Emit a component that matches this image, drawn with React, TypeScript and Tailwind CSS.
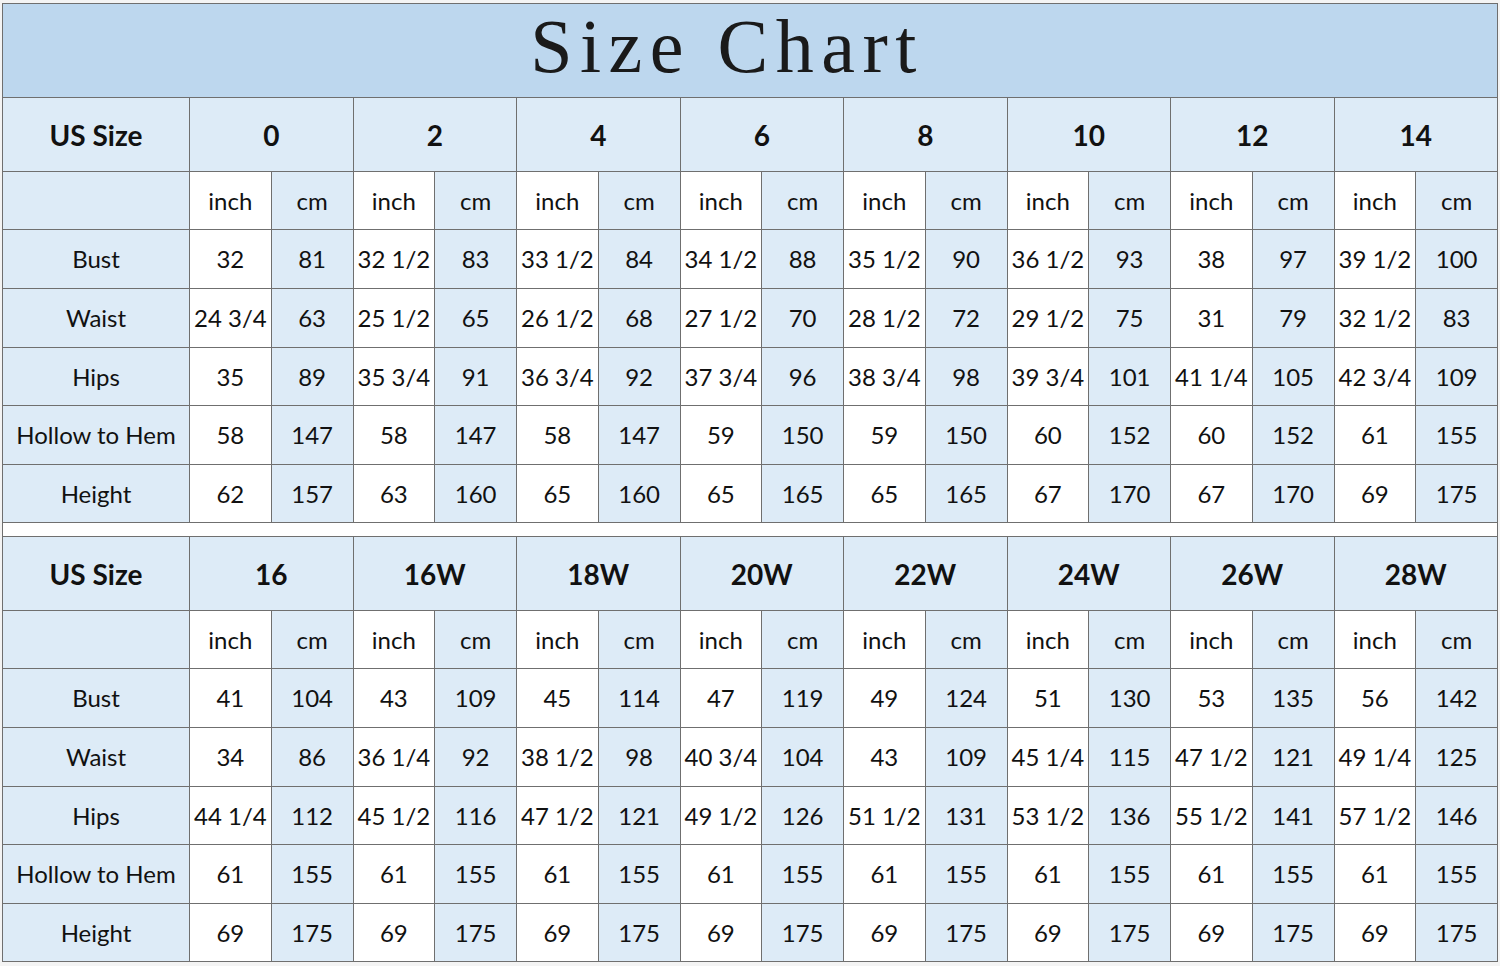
type Cell = [string, string];

interface Row {
  label: string;
  values: Cell[];
}

interface SizeTable {
  sizes: string[];
  rows: Row[];
}

const same = (c: Cell): Cell[] => Array.from({ length: 8 }, () => c);

const tables: SizeTable[] = [
  {
    sizes: ["0", "2", "4", "6", "8", "10", "12", "14"],
    rows: [
      {
        label: "Bust",
        values: [["32", "81"], ["32 1/2", "83"], ["33 1/2", "84"], ["34 1/2", "88"], ["35 1/2", "90"], ["36 1/2", "93"], ["38", "97"], ["39 1/2", "100"]],
      },
      {
        label: "Waist",
        values: [["24 3/4", "63"], ["25 1/2", "65"], ["26 1/2", "68"], ["27 1/2", "70"], ["28 1/2", "72"], ["29 1/2", "75"], ["31", "79"], ["32 1/2", "83"]],
      },
      {
        label: "Hips",
        values: [["35", "89"], ["35 3/4", "91"], ["36 3/4", "92"], ["37 3/4", "96"], ["38 3/4", "98"], ["39 3/4", "101"], ["41 1/4", "105"], ["42 3/4", "109"]],
      },
      {
        label: "Hollow to Hem",
        values: [["58", "147"], ["58", "147"], ["58", "147"], ["59", "150"], ["59", "150"], ["60", "152"], ["60", "152"], ["61", "155"]],
      },
      {
        label: "Height",
        values: [["62", "157"], ["63", "160"], ["65", "160"], ["65", "165"], ["65", "165"], ["67", "170"], ["67", "170"], ["69", "175"]],
      },
    ],
  },
  {
    sizes: ["16", "16W", "18W", "20W", "22W", "24W", "26W", "28W"],
    rows: [
      {
        label: "Bust",
        values: [["41", "104"], ["43", "109"], ["45", "114"], ["47", "119"], ["49", "124"], ["51", "130"], ["53", "135"], ["56", "142"]],
      },
      {
        label: "Waist",
        values: [["34", "86"], ["36 1/4", "92"], ["38 1/2", "98"], ["40 3/4", "104"], ["43", "109"], ["45 1/4", "115"], ["47 1/2", "121"], ["49 1/4", "125"]],
      },
      {
        label: "Hips",
        values: [["44 1/4", "112"], ["45 1/2", "116"], ["47 1/2", "121"], ["49 1/2", "126"], ["51 1/2", "131"], ["53 1/2", "136"], ["55 1/2", "141"], ["57 1/2", "146"]],
      },
      { label: "Hollow to Hem", values: same(["61", "155"]) },
      { label: "Height", values: same(["69", "175"]) },
    ],
  },
];

const rowHeights = ["h-[59px]", "h-[59px]", "h-[58px]", "h-[59px]", "h-[58px]"];

function ChartTable({ table }: { table: SizeTable }) {
  const cell = "border border-[#6f6f6f] text-center align-middle p-0";
  return (
    <table className="w-full table-fixed border-collapse text-[24px] text-[#111]">
      <colgroup>
        <col className="w-[187px]" />
        {Array.from({ length: 16 }, (_, i) => (
          <col key={i} />
        ))}
      </colgroup>
      <tbody>
        <tr className="h-[74px]">
          <td className={`${cell} bg-[#ddebf7] text-[28px] font-bold`}>US Size</td>
          {table.sizes.map((s) => (
            <td key={s} colSpan={2} className={`${cell} bg-[#ddebf7] text-[28px] font-bold`}>
              {s}
            </td>
          ))}
        </tr>
        <tr className="h-[58px]">
          <td className={`${cell} bg-[#ddebf7]`} />
          {table.sizes.map((s) => [
            <td key={s + "i"} className={`${cell} bg-white`}>
              inch
            </td>,
            <td key={s + "c"} className={`${cell} bg-[#ddebf7]`}>
              cm
            </td>,
          ])}
        </tr>
        {table.rows.map((row, r) => (
          <tr key={row.label} className={rowHeights[r]}>
            <td className={`${cell} bg-[#ddebf7]`}>{row.label}</td>
            {row.values.map(([inch, cm], i) => [
              <td key={i + "i"} className={`${cell} bg-white whitespace-nowrap`}>
                {inch}
              </td>,
              <td key={i + "c"} className={`${cell} bg-[#ddebf7]`}>
                {cm}
              </td>,
            ])}
          </tr>
        ))}
      </tbody>
    </table>
  );
}

export default function App() {
  return (
    <div className="h-[966px] w-[1500px] overflow-hidden bg-[#f4f4f4] pl-[2px] pt-[3px] font-['Lato',sans-serif]">
      <div className="w-[1496px] bg-white">
        <div className="flex h-[94px] items-start justify-center border border-b-0 border-[#6f6f6f] bg-[#bdd7ee] pr-[46px]">
          <span className="font-['Liberation_Serif',serif] text-[76px] leading-[85px] tracking-[7.5px] text-[#1a1a1a]">
            Size Chart
          </span>
        </div>
        <ChartTable table={tables[0]} />
        <div className="h-[13px] border-x border-[#6f6f6f] bg-white" />
        <ChartTable table={tables[1]} />
      </div>
    </div>
  );
}
